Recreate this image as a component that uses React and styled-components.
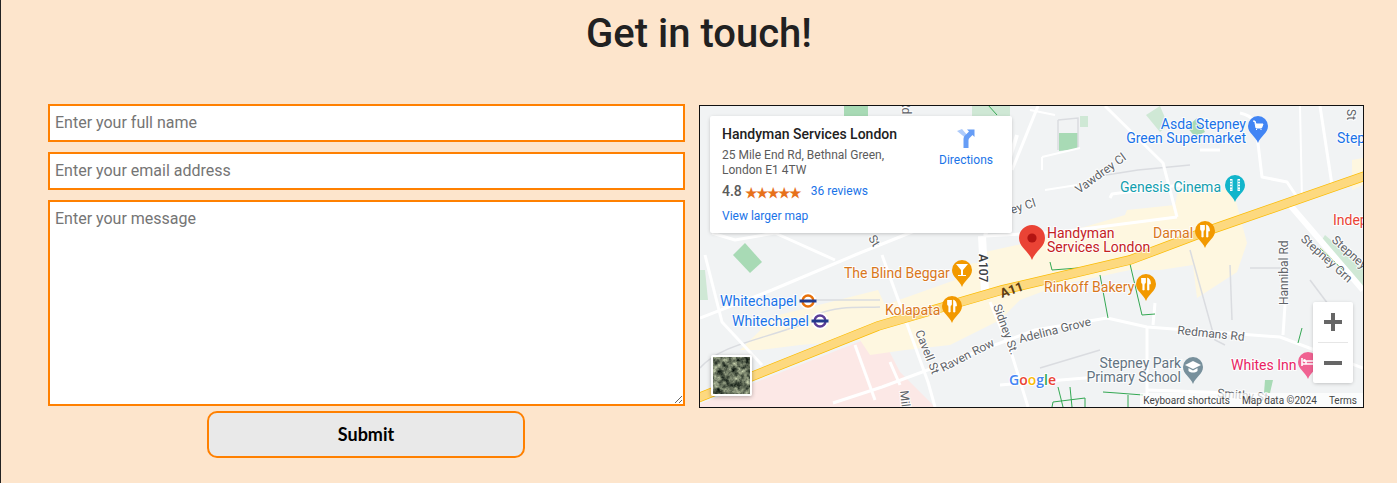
import React from 'react';
import styled, { createGlobalStyle } from 'styled-components';

const GlobalStyle = createGlobalStyle`
  html, body {
    margin: 0;
    padding: 0;
    background: #fde5cc;
  }
  * { box-sizing: border-box; }
`;

const Page = styled.div`
  height: 483px;
  overflow: hidden;
  border-left: 1px solid #222;
  background: #fde5cc;
  font-family: Roboto, sans-serif;
`;

const Title = styled.h1`
  margin: 0;
  height: 104px;
  padding-top: 10px;
  text-align: center;
  font-size: 40px;
  line-height: 47px;
  font-weight: 500;
  color: #212121;
`;

const Content = styled.section`
  display: flex;
  align-items: flex-start;
  gap: 14px;
  padding-left: 47px;
`;

const Form = styled.form`
  display: flex;
  flex-direction: column;
  align-items: center;
  width: 637px;
`;

const fieldCss = `
  display: block;
  width: 100%;
  border: 2px solid #ff8000;
  border-radius: 0;
  outline: none;
  background: #fff;
  font-family: Roboto, sans-serif;
  font-size: 16px;
  &::placeholder { color: #757575; opacity: 1; }
`;

const Field = styled.input`
  ${fieldCss}
  height: 38px;
  padding: 4px 5px 6px;
  margin-bottom: 10px;
`;

const Message = styled.textarea`
  ${fieldCss}
  height: 206px;
  padding: 7px 5px 5px;
  margin-bottom: 5px;
`;

const Submit = styled.button`
  width: 318px;
  height: 47px;
  margin-right: 1px;
  padding: 0 0 2px;
  border: 2px solid #ff8000;
  border-radius: 10px;
  background: #e9e9e9;
  color: #000;
  font-family: Lato, sans-serif;
  font-size: 18px;
  font-weight: 700;
`;

const MapFrame = styled.div`
  position: relative;
  width: 665px;
  height: 303px;
  margin-top: 1px;
  border: 1px solid #111;
  overflow: hidden;
  background: #f1f3f4;
`;

const MapSvg = styled.svg`
  display: block;
  width: 663px;
  height: 301px;
`;

const MapLabel = styled.text`
  font-family: Roboto, sans-serif;
  font-size: ${(p) => p.$size || 14}px;
  font-weight: ${(p) => p.$weight || 400};
  fill: ${(p) => p.$color};
  paint-order: stroke;
  stroke: ${(p) => (p.$halo === false ? 'none' : 'rgba(255,255,255,0.85)')};
  stroke-width: 2px;
`;

const LogoText = styled.text`
  font-family: "Open Sans", sans-serif;
  font-size: 14px;
  font-weight: 600;
  paint-order: stroke;
  stroke: rgba(255,255,255,0.9);
  stroke-width: 2px;
`;

const InfoCard = styled.div`
  position: absolute;
  left: 10px;
  top: 10px;
  width: 302px;
  height: 117px;
  padding: 10px 12px;
  display: flex;
  justify-content: space-between;
  background: #fff;
  border-radius: 2px;
  box-shadow: 0 1px 4px -1px rgba(0,0,0,0.3);
`;

const PlaceInfo = styled.div`
  width: 200px;
`;

const PlaceName = styled.div`
  font-size: 14px;
  line-height: 17px;
  font-weight: 500;
  color: #212121;
`;

const Address = styled.div`
  margin-top: 5px;
  font-size: 12px;
  line-height: 15px;
  color: #5b5b5b;
`;

const RatingRow = styled.div`
  display: flex;
  align-items: center;
  height: 20px;
  margin-top: 3px;
  font-size: 14px;
  font-weight: 500;
  color: #5b5b5b;
`;

const Stars = styled.span`
  margin-left: 3px;
  font-family: "Noto Sans CJK JP", sans-serif;
  font-size: 13px;
  letter-spacing: -2px;
  font-weight: 400;
  color: #e7711b;
`;

const BlueLink = styled.a`
  margin-left: ${(p) => p.$indent || 0}px;
  font-size: 12px;
  font-weight: 400;
  color: #1a73e8;
  text-decoration: none;
`;

const LargerMap = styled.div`
  margin-top: 6px;
  line-height: 15px;
`;

const DirectionsBox = styled.div`
  display: flex;
  flex-direction: column;
  align-items: center;
  gap: 4px;
  width: 56px;
  margin-right: 6px;
  margin-top: 1px;
  font-size: 12px;
  color: #1a73e8;
  line-height: 15px;
`;

const Thumb = styled.div`
  position: absolute;
  left: 11px;
  bottom: 11px;
  width: 41px;
  height: 41px;
  border: 2px solid #fff;
  border-radius: 2px;
  box-shadow: 0 1px 4px rgba(0,0,0,0.3);
  overflow: hidden;
`;

const Zoom = styled.div`
  position: absolute;
  top: 196px;
  right: 10px;
  width: 40px;
  height: 81px;
  display: flex;
  flex-direction: column;
  background: #fff;
  border-radius: 2px;
  box-shadow: 0 1px 4px -1px rgba(0,0,0,0.3);
`;

const ZoomBtn = styled.div`
  flex: 1;
  display: flex;
  align-items: center;
  justify-content: center;
  &:first-child {
    background-image: linear-gradient(#e6e6e6, #e6e6e6);
    background-size: 30px 1px;
    background-position: center bottom;
    background-repeat: no-repeat;
  }
`;

const Attribution = styled.div`
  position: absolute;
  right: 0;
  bottom: 0;
  height: 14px;
  display: flex;
  align-items: center;
  gap: 12px;
  padding: 0 6px 0 3px;
  background: rgba(255,255,255,0.7);
  font-size: 10px;
  color: #444;
  white-space: nowrap;
`;

const roads = [
  { d: 'M1105 106 L1163 163 L1177 217', w: 3 },
  { d: 'M1240 113 C1255 116 1257 125 1257 135 L1262 177 L1287 182 L1297 197', w: 3 },
  { d: 'M1320 106 L1332 185', w: 3 },
  { d: 'M1290 205 L1363 290', w: 6 },
  { d: 'M1017 135 L985 236', w: 4 },
  { d: 'M982 236 L985 292', w: 8 },
  { d: 'M700 318 L772 290 L855 255 L912 232 L935 222', w: 3 },
  { d: 'M705 255 L722 322 L762 365', w: 3 },
  { d: 'M882 255 L928 382 L935 407', w: 3 },
  { d: 'M855 345 L875 400', w: 3 },
  { d: 'M890 362 L900 385', w: 3 },
  { d: 'M833 403 L882 387 L1035 330 L1107 318 L1147 327 L1280 337 L1363 368', w: 3 },
  { d: 'M1147 327 L1147 407', w: 3 },
  { d: 'M1155 303 L1153 325', w: 3 },
  { d: 'M1285 305 L1283 335', w: 3 },
  { d: 'M990 302 L1012 355 L1028 407', w: 3 },
  { d: 'M1000 385 L1097 377', w: 3 },
  { d: 'M1148 390 L1230 393', w: 3 },
  { d: 'M985 236 L1060 232 L1177 217', w: 3 },
  { d: 'M1030 110 L1055 115', w: 2 },
  { d: 'M1042 157 L1080 148', w: 2 },
  { d: 'M1042 157 L1042 170', w: 2 },
  { d: 'M1045 190 L1077 185', w: 2 },
  { d: 'M1110 198 L1112 194 L1180 185', w: 3 },
  { d: 'M1038 106 L1012 170', w: 3 },
  { d: 'M712 233 L735 240 L775 233 L835 260', w: 3 },
  { d: 'M1300 106 L1302 200', w: 2 },
  { d: 'M1200 150 L1220 150', w: 3 },
];

const grayLines = [
  'M800 300 L880 300',
  'M815 315 C840 305 860 308 880 307',
  'M700 368 C720 345 760 340 800 325',
  'M1058 120 L1078 118 L1078 148',
  'M1058 120 L1058 150',
  'M1100 176 L1138 170 L1190 165',
  'M1250 268 L1285 268',
  'M1230 265 L1232 320',
  'M1190 250 L1215 340 L1225 345',
  'M1310 280 L1340 320',
  'M1040 368 L1100 350',
];

const cycleLines = [
  'M1050 262 L1052 270 L1130 264 L1142 315 L1155 314',
  'M1100 275 L1108 318',
  'M1058 387 L1063 407',
  'M1052 407 L1053 402 L1085 398 L1085 407',
  'M1070 387 L1072 407',
  'M1103 392 L1117 393 L1143 395',
  'M1128 395 L1128 407',
  'M1298 343 L1302 328',
  'M988 105 L997 115',
  'M1320 248 L1345 272',
];

const labels = [
  { t: 'Asda Stepney', x: 1246, y: 129, c: '#1a73e8', a: 'end' },
  { t: 'Green Supermarket', x: 1246, y: 143, c: '#1a73e8', a: 'end' },
  { t: 'Step', x: 1337, y: 143, c: '#1a73e8' },
  { t: 'Genesis Cinema', x: 1120, y: 192, c: '#129eaf' },
  { t: 'Handyman', x: 1047, y: 238, c: '#c5221f' },
  { t: 'Services London', x: 1047, y: 252, c: '#c5221f' },
  { t: 'Damal', x: 1153, y: 238, c: '#d9771c' },
  { t: 'Indep', x: 1333, y: 225, c: '#ea4335' },
  { t: 'The Blind Beggar', x: 844, y: 278, c: '#d9771c' },
  { t: 'Kolapata', x: 885, y: 315, c: '#d9771c' },
  { t: 'Whitechapel', x: 720, y: 306, c: '#1a73e8' },
  { t: 'Whitechapel', x: 732, y: 326, c: '#1a73e8' },
  { t: 'Rinkoff Bakery', x: 1044, y: 292, c: '#d9771c' },
  { t: 'Stepney Park', x: 1181, y: 368, c: '#637381', a: 'end' },
  { t: 'Primary School', x: 1181, y: 382, c: '#637381', a: 'end' },
  { t: 'Whites Inn', x: 1231, y: 370, c: '#e91e63' },
];

const streets = [
  { t: 'Vawdrey Cl', x: 1079, y: 194, r: -36 },
  { t: 'Sidney St.', x: 993, y: 306, r: 70 },
  { t: 'Cavell St', x: 915, y: 332, r: 68 },
  { t: 'Raven Row', x: 943, y: 372, r: -27 },
  { t: 'Adelina Grove', x: 1020, y: 343, r: -14 },
  { t: 'Redmans Rd', x: 1177, y: 334, r: 6 },
  { t: 'Hannibal Rd', x: 1288, y: 305, r: -90 },
  { t: 'Stepney Grn', x: 1300, y: 240, r: 42 },
  { t: 'Stepney', x: 1331, y: 241, r: 42 },
  { t: 'Smithy St', x: 1217, y: 397, r: 5 },
  { t: 'Milk', x: 900, y: 391, r: 84 },
  { t: 'St', x: 1347, y: 109, r: 90 },
  { t: 'Rd', x: 902, y: 100, r: 90 },
  { t: 'ey Cl', x: 1012, y: 214, r: -18 },
  { t: 'St', x: 868, y: 238, r: 60 },
];

// teardrop marker, x/y is the middle of the round head
function Pin({ x, y, color, r = 10, tip = 17, children }) {
  return (
    <g transform={`translate(${x} ${y})`}>
      <path
        d={`M0 ${tip} C${-r * 0.25} ${tip * 0.6} ${-r} ${r * 0.7} ${-r} 0 A${r} ${r} 0 1 1 ${r} 0 C${r} ${r * 0.7} ${r * 0.25} ${tip * 0.6} 0 ${tip} Z`}
        fill={color}
      />
      {children}
    </g>
  );
}

const Fork = () => (
  <path
    d="M-4.5 -6 V-2 C-4.5 -0.5 -3.5 0 -3.2 0 V6 H-1.8 V0 C-1.5 0 -0.5 -0.5 -0.5 -2 V-6 M1.5 6 V-6 C3.5 -5.5 4.5 -3 4.5 0 H3 V6 Z"
    fill="#fff"
    stroke="#fff"
    strokeWidth="0.7"
  />
);

function Roundel({ x, y, color }) {
  return (
    <g>
      <circle cx={x} cy={y} r="8.5" fill="#fff" />
      <circle cx={x} cy={y} r="5.5" fill="none" stroke={color} strokeWidth="2.4" />
      <rect x={x - 8.5} y={y - 1.5} width="17" height="3" fill="#233a8b" />
    </g>
  );
}

function TownMap() {
  return (
    <MapSvg viewBox="700 106 663 301">
      <rect x="700" y="106" width="663" height="301" fill="#f1f3f4" />

      <polygon points="700,407 700,404 884,332 886,345 900,372 935,407" fill="#fce8e6" />
      <polygon points="775,316 878,290 885,305 955,280 960,265 985,262 985,252 1040,240 1125,215 1127,210 1175,205 1178,190 1233,190 1247,243 1237,272 1197,298 1193,265 1160,270 1130,270 1060,285 1020,300 1000,320 950,345 905,350 870,355 860,340 800,345 760,350 740,350" fill="#fef7e0" />
      <polygon points="1352,160 1363,158 1363,185 1352,190" fill="#fef7e0" />

      <polygon points="844,106 868,106 868,118 844,118" fill="#a8dab5" />
      <polygon points="972,106 1010,106 1010,120 972,120" fill="#cfe8d5" />
      <polygon points="745,243 762,262 750,273 733,255" fill="#a8dab5" />
      <polygon points="1059,133 1078,133 1078,149 1059,151" fill="#a8dab5" />
      <polygon points="1080,116 1088,116 1088,127 1080,127" fill="#cfe8d5" />
      <polygon points="1146,115 1160,106 1168,125 1160,132" fill="#cfe8d5" />
      <polygon points="1187,127 1197,118 1205,132 1195,137" fill="#a8dab5" />
      <polygon points="1265,380 1273,380 1270,393 1264,393" fill="#a8dab5" />
      <polygon points="1325,235 1363,268 1363,290 1355,280 1320,243" fill="#cfe8d5" />
      <polygon points="700,270 705,270 708,300 700,300" fill="#cfe8d5" />

      {grayLines.map((d) => (
        <path key={d} d={d} fill="none" stroke="#dadce0" strokeWidth="1.5" />
      ))}
      {roads.map((r) => (
        <path key={r.d} d={r.d} fill="none" stroke="#fff" strokeWidth={r.w} strokeLinejoin="round" />
      ))}
      {cycleLines.map((d) => (
        <path key={d} d={d} fill="none" stroke="#34a853" strokeWidth="1" />
      ))}

      <path d="M698 398 L878 326 L1002 290 L1130 260 L1207 231 L1365 176" fill="none" stroke="#fbbc04" strokeWidth="9.6" />
      <path d="M698 398 L878 326 L1002 290 L1130 260 L1207 231 L1365 176" fill="none" stroke="#fdd97f" strokeWidth="8.2" />

      {labels.map((l) => (
        <MapLabel key={l.t + l.y} x={l.x} y={l.y} $color={l.c} textAnchor={l.a || 'start'}>
          {l.t}
        </MapLabel>
      ))}
      {streets.map((s) => (
        <MapLabel key={s.t + s.x} x={s.x} y={s.y} $size={12} $color="#5f6368" transform={`rotate(${s.r} ${s.x} ${s.y})`}>
          {s.t}
        </MapLabel>
      ))}
      <MapLabel x="979" y="254" $size={12} $weight={500} $color="#3c4043" transform="rotate(90 979 254)">A107</MapLabel>
      <MapLabel x="1002" y="298" $size={13} $weight={700} $color="#5c3d14" $halo={false} transform="rotate(-20 1002 298)">A11</MapLabel>

      <Roundel x={808} y={301} color="#e8710a" />
      <Roundel x={820} y={321} color="#5b3c96" />

      <Pin x={1258} y={126} color="#4285f4">
        <path d="M-5 -5 H-3 L-2 -2 H5 L3.5 2 H-2 L-3 -3 M-2 3.5 H-1 M2.5 3.5 H3.5" fill="#fff" stroke="#fff" strokeWidth="1" />
      </Pin>
      <Pin x={1235} y={185} color="#12b5cb">
        <rect x="-5" y="-6" width="10" height="12" fill="#fff" />
        <rect x="-2.5" y="-6" width="5" height="12" fill="#12b5cb" />
        <path d="M-4 -4.5 V4.5 M4 -4.5 V4.5" stroke="#12b5cb" strokeWidth="1.4" strokeDasharray="1.4 1.4" />
      </Pin>
      <Pin x={1205} y={231} color="#f29900"><Fork /></Pin>
      <Pin x={962} y={270} color="#f29900">
        <path d="M-6 -6 H6 L1 0 V5 H4 V6 H-4 V5 H-1 V0 Z" fill="#fff" />
      </Pin>
      <Pin x={952} y={306} color="#f29900"><Fork /></Pin>
      <Pin x={1146} y={284} color="#f29900"><Fork /></Pin>
      <Pin x={1193} y={367} color="#78909c">
        <path d="M0 -6 L8 -2 L0 2 L-8 -2 Z M-4.5 1 V4 C-2 6 2 6 4.5 4 V1 L0 3.5 Z" fill="#fff" />
      </Pin>
      <Pin x={1308} y={362} color="#f06292">
        <path d="M-6 -4 V4 M-6 2 H6 V4 M6 2 V-1 H-2 V2" fill="none" stroke="#fff" strokeWidth="1.6" />
        <circle cx="-3.5" cy="-1.5" r="1.5" fill="#fff" />
      </Pin>
      <Pin x={1032} y={238} color="#ea4335" r={13} tip={22}>
        <circle r="4.6" fill="#b31412" />
      </Pin>

      <LogoText x="1009" y="385">
        <tspan fill="#4285f4">G</tspan>
        <tspan fill="#ea4335">o</tspan>
        <tspan fill="#fbbc04">o</tspan>
        <tspan fill="#4285f4">g</tspan>
        <tspan fill="#34a853">l</tspan>
        <tspan fill="#ea4335">e</tspan>
      </LogoText>
    </MapSvg>
  );
}

function App() {
  return (
    <Page>
      <GlobalStyle />
      <Title>Get in touch!</Title>
      <Content>
        <Form onSubmit={(e) => e.preventDefault()}>
          <Field type="text" placeholder="Enter your full name" />
          <Field type="email" placeholder="Enter your email address" />
          <Message placeholder="Enter your message" />
          <Submit type="submit">Submit</Submit>
        </Form>
        <MapFrame>
          <TownMap />
          <InfoCard>
            <PlaceInfo>
              <PlaceName>Handyman Services London</PlaceName>
              <Address>25 Mile End Rd, Bethnal Green,<br />London E1 4TW</Address>
              <RatingRow>
                4.8<Stars>★★★★★</Stars>
                <BlueLink $indent={11}>36 reviews</BlueLink>
              </RatingRow>
              <LargerMap><BlueLink>View larger map</BlueLink></LargerMap>
            </PlaceInfo>
            <DirectionsBox>
              <svg width="22" height="22" viewBox="0 0 22 22">
                <path d="M2 4 L7 2 L13 9 L13 13 Z" fill="#aecbfa" />
                <path d="M8.5 21 V12 C8.5 10 9.5 9 11 7.5 L14 4.5 L12 2.5 H19.5 V10 L17.5 8 L14.5 11 C13.5 12 13.5 13 13.5 14 V21 Z" fill="#669df6" />
              </svg>
              Directions
            </DirectionsBox>
          </InfoCard>
          <Thumb>
            <svg width="37" height="37" viewBox="0 0 37 37">
              <filter id="aerial" colorInterpolationFilters="sRGB">
                <feTurbulence type="fractalNoise" baseFrequency="0.16" numOctaves="4" seed="7" />
                <feColorMatrix values="1.3 0 0 0 -0.26  1.3 0 0 0 -0.22  1.1 0 0 0 -0.2  0 0 0 0 1" />
              </filter>
              <rect width="37" height="37" filter="url(#aerial)" />
            </svg>
          </Thumb>
          <Zoom>
            <ZoomBtn>
              <svg width="18" height="18" viewBox="0 0 18 18"><path d="M7 0h4v7h7v4h-7v7H7v-7H0V7h7z" fill="#666" /></svg>
            </ZoomBtn>
            <ZoomBtn>
              <svg width="18" height="18" viewBox="0 0 18 18"><path d="M0 7h18v4H0z" fill="#666" /></svg>
            </ZoomBtn>
          </Zoom>
          <Attribution>
            <span>Keyboard shortcuts</span>
            <span>Map data ©2024</span>
            <span>Terms</span>
          </Attribution>
        </MapFrame>
      </Content>
    </Page>
  );
}

export default App;
